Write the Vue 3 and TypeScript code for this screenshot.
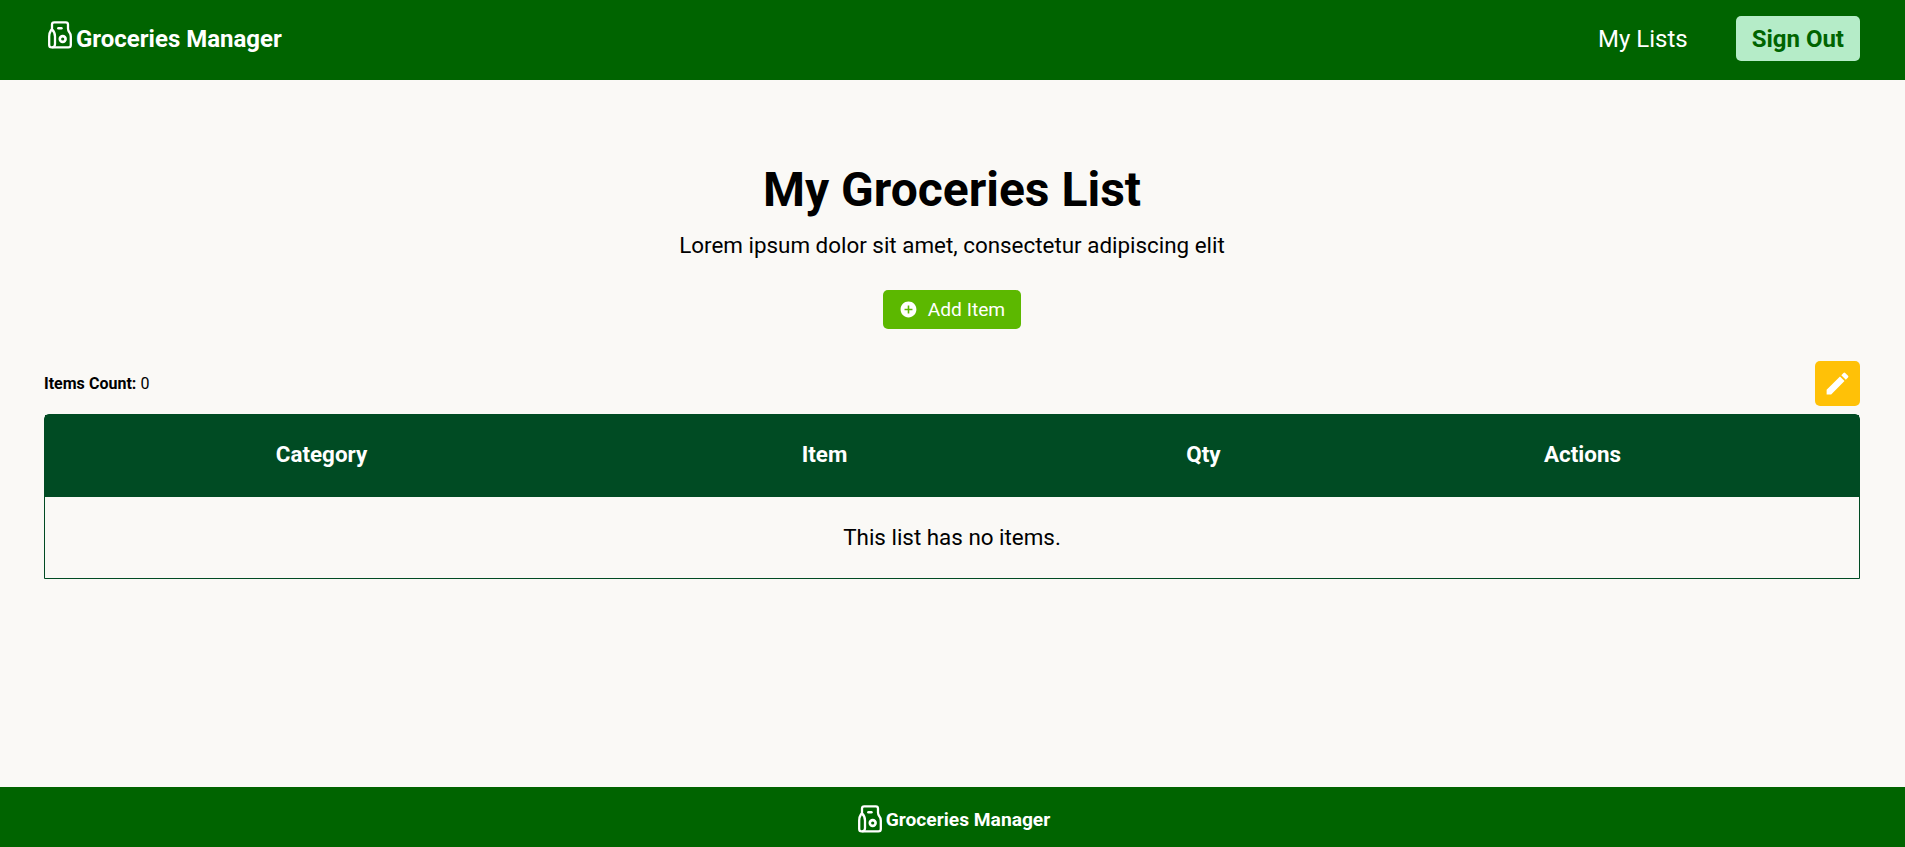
<script setup lang="ts">
import { h, ref, type FunctionalComponent } from 'vue'

interface Column {
  key: string
  label: string
}

const title = 'My Groceries List'
const items = ref<string[]>([])
const columns: Column[] = [
  { key: 'category', label: 'Category' },
  { key: 'item', label: 'Item' },
  { key: 'qty', label: 'Qty' },
  { key: 'actions', label: 'Actions' },
  { key: 'edit', label: '' },
]

const BagIcon: FunctionalComponent = () =>
  h('svg', { viewBox: '0 0 24 28', width: 24, height: 28, fill: 'none', stroke: '#fff', 'stroke-width': 2.3, 'stroke-linecap': 'round', 'stroke-linejoin': 'round' }, [
    h('path', { d: 'M4 7.5V3.6Q4 1.4 6.2 1.4H17.8Q20 1.4 20 3.6V7.5Q20 9.2 21.2 11Q22.8 13 22.8 15.5V24Q22.8 26.4 20.4 26.4H3.6Q1.2 26.4 1.2 24V15.5Q1.2 12 2.9 9.5Q4 8 4 7.5' }),
    h('path', { d: 'M4 8.5Q7 11 7 15.5V23Q7 25.6 5 26.2' }),
    h('path', { d: 'M10.4 7.2H13.4', 'stroke-width': 2.6 }),
    h('circle', { cx: 14.7, cy: 18, r: 2.9, 'stroke-width': 2.6 }),
  ])
</script>

<template>
  <div class="page">
    <header class="header">
      <div class="brand"><BagIcon class="bag" /><span>Groceries Manager</span></div>
      <nav class="nav">
        <a class="link">My Lists</a>
        <button class="sign-out">Sign Out</button>
      </nav>
    </header>
    <main class="main">
      <h1>{{ title }}</h1>
      <p class="subtitle">Lorem ipsum dolor sit amet, consectetur adipiscing elit</p>
      <button class="add">
        <svg width="19" height="19" viewBox="0 0 24 24" fill="#fff">
          <path d="M12 2C6.48 2 2 6.48 2 12s4.48 10 10 10 10-4.48 10-10S17.52 2 12 2zm5 11h-4v4h-2v-4H7v-2h4V7h2v4h4v2z" />
        </svg>
        <span>Add Item</span>
      </button>
      <div class="toolbar">
        <div class="count"><b>Items Count:</b> {{ items.length }}</div>
        <button class="edit" aria-label="Edit list">
          <svg width="29" height="29" viewBox="0 0 24 24" fill="#fff">
            <path d="M3 17.25V21h3.75L17.81 9.94l-3.75-3.75L3 17.25zM20.71 7.04a1 1 0 0 0 0-1.41l-2.34-2.34a1 1 0 0 0-1.41 0l-1.83 1.83 3.75 3.75 1.83-1.83z" />
          </svg>
        </button>
      </div>
      <section class="table">
        <div class="row head">
          <div v-for="column in columns" :key="column.key">{{ column.label }}</div>
        </div>
        <div v-if="!items.length" class="empty">This list has no items.</div>
      </section>
    </main>
    <footer class="footer">
      <div class="brand small"><BagIcon class="bag" /><span>Groceries Manager</span></div>
    </footer>
  </div>
</template>

<style>
body {
  margin: 0;
}
</style>

<style scoped>
.page {
  height: 100vh;
  display: flex;
  flex-direction: column;
  background: #faf9f6;
  color: #000;
  font-family: Roboto, sans-serif;
}
button {
  border: 0;
  margin: 0;
  font-family: inherit;
  cursor: pointer;
}
svg {
  display: block;
  flex: none;
}
.header {
  height: 80px;
  box-sizing: border-box;
  padding: 0 45px 3px 48px;
  display: flex;
  align-items: center;
  justify-content: space-between;
  background: #006400;
  color: #fff;
}
.brand {
  display: flex;
  align-items: center;
  gap: 4px;
  font-size: 24px;
  font-weight: 700;
}
.header .bag {
  margin-top: -7px;
}
.footer .bag {
  margin-top: -2px;
}
.small {
  font-size: 19.2px;
}
.nav {
  display: flex;
  align-items: center;
  gap: 48px;
  font-size: 24px;
}
.sign-out {
  height: 45px;
  padding: 0 16px;
  border-radius: 5px;
  background: #b5ecc8;
  color: #006400;
  font-size: 24px;
  font-weight: 700;
}
.main {
  flex: 1;
  padding: 82px 45px 0 44px;
  display: flex;
  flex-direction: column;
  align-items: center;
}
h1 {
  margin: 0;
  font-size: 48px;
  line-height: 56px;
  font-weight: 700;
}
.subtitle {
  margin: 12px 0 30px;
  font-size: 22.4px;
  line-height: 30px;
}
.add {
  height: 39px;
  padding: 0 15.5px 0 16px;
  display: flex;
  align-items: center;
  gap: 9.5px;
  border-radius: 5px;
  background: #5cb800;
  color: #fff;
  font-size: 19.2px;
}
.toolbar {
  align-self: stretch;
  margin: 32px 0 8px;
  display: flex;
  align-items: center;
  justify-content: space-between;
}
.count {
  font-size: 16px;
  word-spacing: 0.2px;
}
.edit {
  width: 45px;
  height: 45px;
  padding: 0;
  display: flex;
  align-items: center;
  justify-content: center;
  border-radius: 5px;
  background: #ffc107;
}
.table {
  align-self: stretch;
  box-sizing: border-box;
  height: 165px;
  display: flex;
  flex-direction: column;
  border: 1px solid #004b23;
  border-radius: 5px 5px 0 0;
  font-size: 22.4px;
  text-align: center;
}
.row {
  height: 82px;
  box-sizing: border-box;
  padding-bottom: 5px;
  display: grid;
  grid-template-columns: 553fr 453fr 305fr 453fr 50fr;
  align-items: center;
}
.head {
  background: #004b23;
  color: #fff;
  font-weight: 700;
}
.empty {
  flex: 1;
  padding-bottom: 2px;
  display: flex;
  align-items: center;
  justify-content: center;
}
.footer {
  height: 60px;
  box-sizing: border-box;
  padding: 5px 0 0 3px;
  display: flex;
  align-items: center;
  justify-content: center;
  background: #006400;
  color: #fff;
}
</style>
